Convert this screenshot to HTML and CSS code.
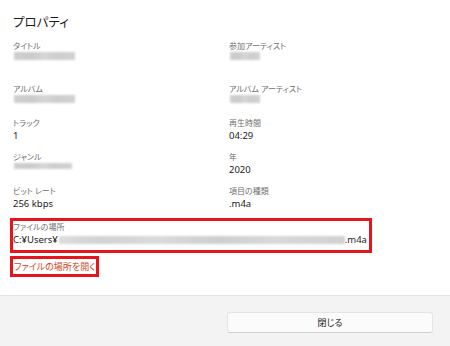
FILE: index.html
```html
<!DOCTYPE html>
<html lang="ja">
<head>
<meta charset="utf-8">
<link rel="stylesheet" href="styles.css">
</head>
<body>
<div class="dialog">
  <div class="content">
    <h1 class="title">プロパティ</h1>
    <div class="grid">
      <div class="field tall">
        <div class="label">タイトル</div>
        <div class="value"><span class="blur w61"></span></div>
      </div>
      <div class="field tall">
        <div class="label">参加アーティスト</div>
        <div class="value"><span class="blur w30"></span></div>
      </div>
      <div class="field">
        <div class="label">アルバム</div>
        <div class="value"><span class="blur w61"></span></div>
      </div>
      <div class="field">
        <div class="label">アルバム アーティスト</div>
        <div class="value"><span class="blur w30"></span></div>
      </div>
      <div class="field">
        <div class="label">トラック</div>
        <div class="value">1</div>
      </div>
      <div class="field">
        <div class="label">再生時間</div>
        <div class="value">04:29</div>
      </div>
      <div class="field">
        <div class="label">ジャンル</div>
        <div class="value"><span class="blur w58 thin"></span></div>
      </div>
      <div class="field">
        <div class="label">年</div>
        <div class="value">2020</div>
      </div>
      <div class="field">
        <div class="label">ビット レート</div>
        <div class="value">256 kbps</div>
      </div>
      <div class="field">
        <div class="label">項目の種類</div>
        <div class="value">.m4a</div>
      </div>
    </div>
    <div class="path-box">
      <div class="label">ファイルの場所</div>
      <div class="value">C:¥Users¥<span class="blur path-blur"></span>.m4a</div>
    </div>
    <div class="link-box">
      <span class="link">ファイルの場所を開く</span>
    </div>
  </div>
  <div class="footer">
    <button class="close-btn">閉じる</button>
  </div>
</div>
</body>
</html>
```

FILE: styles.css
```css
html, body {
  margin: 0;
  padding: 0;
  background: #ffffff;
}
body {
  width: 450px;
  height: 346px;
  overflow: hidden;
  font-family: "Noto Sans", "Noto Sans CJK JP", sans-serif;
  font-feature-settings: "palt";
  color: #1b1b1b;
}
.dialog {
  display: flex;
  flex-direction: column;
  height: 346px;
}
.content {
  flex: 1;
  padding: 12px 0 0 13px;
}
.title {
  margin: 0;
  font-size: 12.5px;
  font-weight: 400;
  line-height: 21px;
  color: #1b1b1b;
}
.grid {
  margin-top: 7px;
  display: grid;
  grid-template-columns: 216px 1fr;
}
.field {
  height: 34px;
}
.field.tall {
  height: 43px;
}
.label {
  font-size: 8px;
  line-height: 12px;
  color: #707070;
  white-space: nowrap;
}
.value {
  font-size: 9.5px;
  line-height: 13px;
  color: #1b1b1b;
  white-space: nowrap;
  display: flex;
  align-items: center;
}
.blur {
  display: inline-block;
  height: 8px;
  margin-left: 1px;
  background: linear-gradient(90deg, #cfcfcf 0%, #cbcbcb 30%, #d6d6d6 50%, #cdcdcd 70%, #d2d2d2 100%);
  filter: blur(1px);
}
.blur.thin { height: 6px; }
.w61 { width: 61px; }
.w30 { width: 30px; }
.w58 { width: 58px; }
.path-box {
  margin-top: -1px;
  margin-left: -3px;
  width: 356px;
  height: 29px;
  border: 3px solid #e8141c;
}
.path-blur {
  width: 286px;
  height: 8px;
  margin: 0 0 0 1px;
  background: linear-gradient(90deg, #dcdcdc 0%, #d2d2d2 15%, #dadada 35%, #cecece 55%, #d8d8d8 75%, #d1d1d1 100%);
}
.link-box {
  margin-top: 3px;
  margin-left: -3px;
  width: 83px;
  height: 15px;
  border: 3px solid #e8141c;
  display: flex;
  align-items: center;
}
.link {
  margin-left: 1px;
  font-size: 9px;
  line-height: 15px;
  color: #d0451b;
  white-space: nowrap;
}
.footer {
  height: 51px;
  border-top: 1px solid #e5e5e5;
  background: #f3f3f3;
  display: flex;
  justify-content: flex-end;
  align-items: flex-start;
  padding: 16px 17px 0 0;
  box-sizing: border-box;
}
.close-btn {
  width: 206px;
  height: 21px;
  border: 1px solid #e5e5e5;
  border-bottom-color: #d0d0d0;
  border-radius: 3px;
  background: #fbfbfb;
  font-family: "Noto Sans", "Noto Sans CJK JP", sans-serif;
  font-feature-settings: "palt";
  font-size: 9px;
  color: #1b1b1b;
  padding: 0;
}
```
